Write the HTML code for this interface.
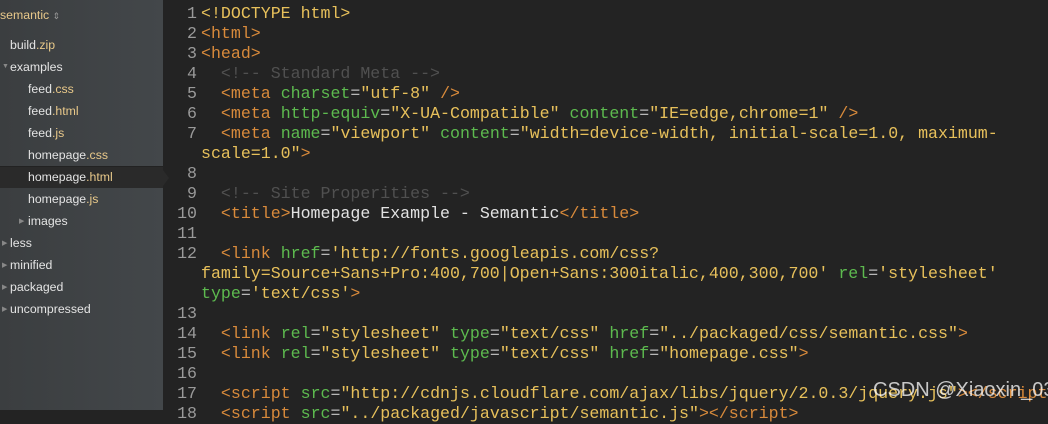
<!DOCTYPE html>
<html><head><style>
body{margin:0;width:1048px;height:410px;overflow:hidden;background:#232323;font-family:"Liberation Sans",sans-serif;position:relative}
#side{position:absolute;left:0;top:0;width:163px;height:410px;background:linear-gradient(90deg,#3b3e40,#43474a);}
.it{position:absolute;height:22px;line-height:22px;font-size:12.3px;color:#e4e4e4;white-space:nowrap}
.it i{font-style:normal;color:#e9c98a}
.ar{position:absolute;font-size:7px;color:#888}
#sel{position:absolute;left:0;top:166px;width:163px;height:21px;background:#2a2a2a;border-top:1px solid #222}
#sel:after{content:"";position:absolute;right:-6px;top:3px;border-left:6px solid #2a2a2a;border-top:8px solid transparent;border-bottom:8px solid transparent}
#code{position:absolute;left:0;top:4px;width:1048px;font-family:"Liberation Mono",monospace;font-size:16.6px;line-height:20px;color:#e2e2e2}
.l{position:relative;height:20px}
.n{position:absolute;left:160px;width:37px;text-align:right;color:#9a9a9a}
.x{position:absolute;left:201px;white-space:pre}
.t{color:#d88a3b}.a{color:#5dba4f}.s{color:#e7c05b}.c{color:#505050}.p{color:#b8b8b8}
#wm{position:absolute;left:873px;top:379px;font-size:20px;color:rgba(255,255,255,.75);font-family:"Liberation Sans",sans-serif;white-space:nowrap}
</style></head><body>
<div id="side">
<div id="sel"></div>
<div class="it" style="left:0;top:4px;color:#e8c88a">semantic <span style="color:#999;font-size:9px">&#8661;</span></div>
<div class="it" style="left:10px;top:34px">build<i>.zip</i></div>
<div class="ar" style="left:2px;top:63px">&#9660;</div>
<div class="it" style="left:10px;top:56px">examples</div>
<div class="it" style="left:28px;top:78px">feed<i>.css</i></div>
<div class="it" style="left:28px;top:100px">feed<i>.html</i></div>
<div class="it" style="left:28px;top:122px">feed<i>.js</i></div>
<div class="it" style="left:28px;top:144px">homepage<i>.css</i></div>
<div class="it" style="left:28px;top:166px">homepage<i>.html</i></div>
<div class="it" style="left:28px;top:188px">homepage<i>.js</i></div>
<div class="ar" style="left:19px;top:217px">&#9654;</div>
<div class="it" style="left:28px;top:210px">images</div>
<div class="ar" style="left:2px;top:239px">&#9654;</div>
<div class="it" style="left:10px;top:232px">less</div>
<div class="ar" style="left:2px;top:261px">&#9654;</div>
<div class="it" style="left:10px;top:254px">minified</div>
<div class="ar" style="left:2px;top:283px">&#9654;</div>
<div class="it" style="left:10px;top:276px">packaged</div>
<div class="ar" style="left:2px;top:305px">&#9654;</div>
<div class="it" style="left:10px;top:298px">uncompressed</div>
</div>
<div id="code">
<div class="l"><span class="n">1</span><span class="x"><span class="s">&lt;!DOCTYPE html&gt;</span></span></div>
<div class="l"><span class="n">2</span><span class="x"><span class="t">&lt;html&gt;</span></span></div>
<div class="l"><span class="n">3</span><span class="x"><span class="t">&lt;head&gt;</span></span></div>
<div class="l"><span class="n">4</span><span class="x">  <span class="c">&lt;!-- Standard Meta --&gt;</span></span></div>
<div class="l"><span class="n">5</span><span class="x">  <span class="t">&lt;meta</span> <span class="a">charset</span><span class="p">=</span><span class="s">"utf-8"</span> <span class="t">/&gt;</span></span></div>
<div class="l"><span class="n">6</span><span class="x">  <span class="t">&lt;meta</span> <span class="a">http-equiv</span><span class="p">=</span><span class="s">"X-UA-Compatible"</span> <span class="a">content</span><span class="p">=</span><span class="s">"IE=edge,chrome=1"</span> <span class="t">/&gt;</span></span></div>
<div class="l"><span class="n">7</span><span class="x">  <span class="t">&lt;meta</span> <span class="a">name</span><span class="p">=</span><span class="s">"viewport"</span> <span class="a">content</span><span class="p">=</span><span class="s">"width=device-width, initial-scale=1.0, maximum-</span></span></div>
<div class="l"><span class="x"><span class="s">scale=1.0"</span><span class="t">&gt;</span></span></div>
<div class="l"><span class="n">8</span></div>
<div class="l"><span class="n">9</span><span class="x">  <span class="c">&lt;!-- Site Properities --&gt;</span></span></div>
<div class="l"><span class="n">10</span><span class="x">  <span class="t">&lt;title&gt;</span>Homepage Example - Semantic<span class="t">&lt;/title&gt;</span></span></div>
<div class="l"><span class="n">11</span></div>
<div class="l"><span class="n">12</span><span class="x">  <span class="t">&lt;link</span> <span class="a">href</span><span class="p">=</span><span class="s">'http://fonts.googleapis.com/css?</span></span></div>
<div class="l"><span class="x"><span class="s">family=Source+Sans+Pro:400,700|Open+Sans:300italic,400,300,700'</span> <span class="a">rel</span><span class="p">=</span><span class="s">'stylesheet'</span></span></div>
<div class="l"><span class="x"><span class="a">type</span><span class="p">=</span><span class="s">'text/css'</span><span class="t">&gt;</span></span></div>
<div class="l"><span class="n">13</span></div>
<div class="l"><span class="n">14</span><span class="x">  <span class="t">&lt;link</span> <span class="a">rel</span><span class="p">=</span><span class="s">"stylesheet"</span> <span class="a">type</span><span class="p">=</span><span class="s">"text/css"</span> <span class="a">href</span><span class="p">=</span><span class="s">"../packaged/css/semantic.css"</span><span class="t">&gt;</span></span></div>
<div class="l"><span class="n">15</span><span class="x">  <span class="t">&lt;link</span> <span class="a">rel</span><span class="p">=</span><span class="s">"stylesheet"</span> <span class="a">type</span><span class="p">=</span><span class="s">"text/css"</span> <span class="a">href</span><span class="p">=</span><span class="s">"homepage.css"</span><span class="t">&gt;</span></span></div>
<div class="l"><span class="n">16</span></div>
<div class="l"><span class="n">17</span><span class="x">  <span class="t">&lt;script</span> <span class="a">src</span><span class="p">=</span><span class="s">"http://cdnjs.cloudflare.com/ajax/libs/jquery/2.0.3/jquery.js"</span><span class="t">&gt;&lt;/script&gt;</span></span></div>
<div class="l"><span class="n">18</span><span class="x">  <span class="t">&lt;script</span> <span class="a">src</span><span class="p">=</span><span class="s">"../packaged/javascript/semantic.js"</span><span class="t">&gt;&lt;/script&gt;</span></span></div>
</div>
<div id="wm">CSDN @Xiaoxin_03</div>
</body></html>
